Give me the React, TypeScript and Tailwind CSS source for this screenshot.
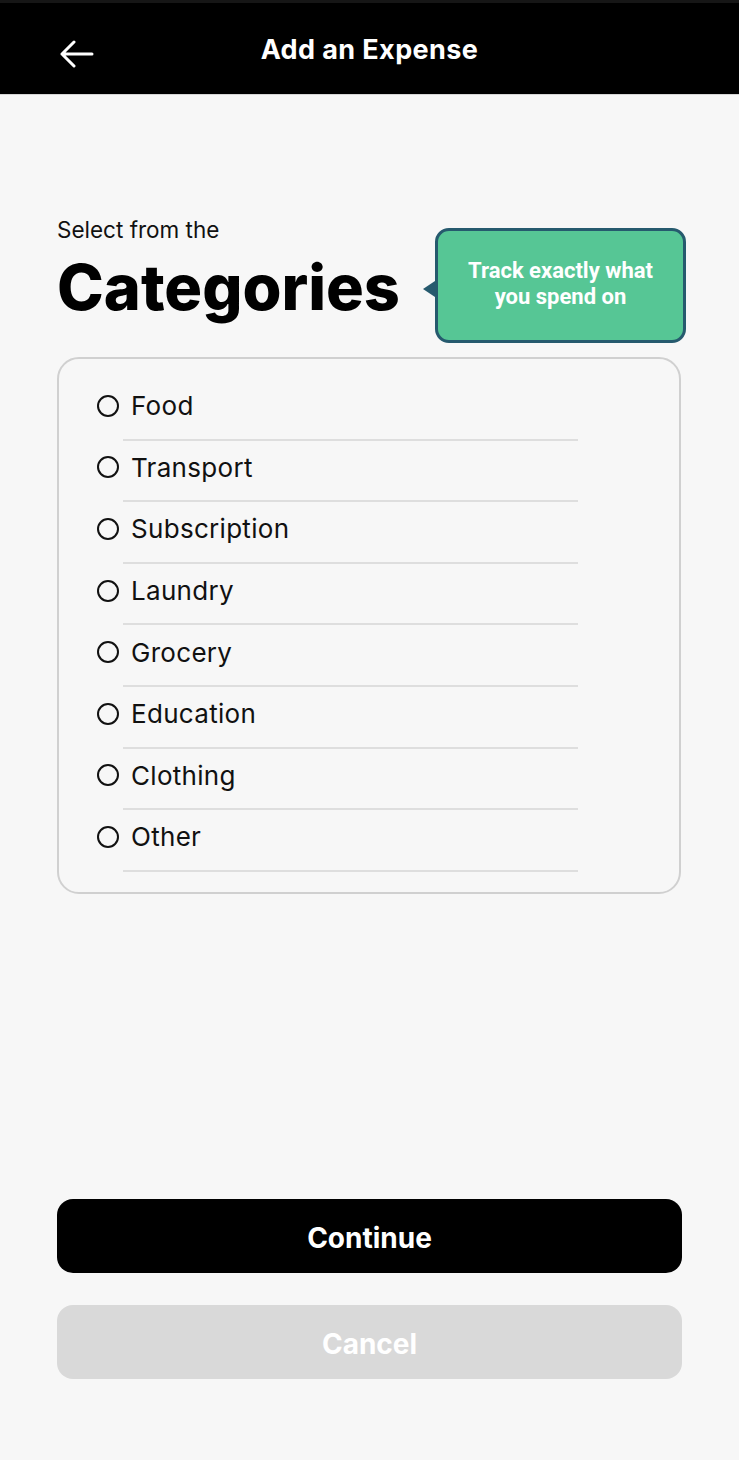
import React from "react";

const categories = [
  "Food",
  "Transport",
  "Subscription",
  "Laundry",
  "Grocery",
  "Education",
  "Clothing",
  "Other",
];

const BackArrow = () => (
  <svg width="34" height="30" viewBox="0 0 34 30" fill="none">
    <path
      d="M14 3 L2 15 L14 27 M2 15 H32"
      stroke="white"
      strokeWidth="3"
      strokeLinecap="round"
      strokeLinejoin="round"
    />
  </svg>
);

const CategoryRow = ({ label }: { label: string }) => {
  return (
    <div className="flex flex-col">
      <div className="flex h-[59.6px] items-center gap-[12px] pb-[6px] pl-[38px]">
        <span className="h-[22px] w-[22px] rounded-full border-[2px] border-[#111]" />
        <span className="text-[26px] text-[#111] font-['Inter',sans-serif] tracking-[0.3px]">
          {label}
        </span>
      </div>
      <div className="ml-[64px] h-[2px] w-[455px] bg-[#dedede]" />
    </div>
  );
};

export default function App() {
  return (
    <div className="flex min-h-[1460px] w-full flex-col bg-[#f7f7f7]">
      <div className="h-[3px] bg-[#161616]" />
      <header className="relative flex h-[92px] items-center justify-center border-b border-[#d6d6d6] bg-black">
        <button className="absolute left-[60px] top-[36px]">
          <BackArrow />
        </button>
        <h1 className="mt-[4px] text-[27px] font-bold text-white font-['Inter',sans-serif] tracking-[0.4px]">
          Add an Expense
        </h1>
      </header>

      <main className="flex flex-1 flex-col px-[57px]">
        <div className="mt-[122px] flex items-start justify-between">
          <div className="flex flex-col">
            <p className="text-[22.5px] leading-[26px] text-[#111] font-['Inter',sans-serif]">
              Select from the
            </p>
            <h2 className="mt-[4px] text-[63px] leading-[80px] font-extrabold text-black font-['Inter',sans-serif] tracking-[0px]">
              Categories
            </h2>
          </div>
          <div className="relative -mr-[4px] mt-[11px] flex h-[115px] w-[251px] items-center justify-center rounded-[14px] border-[3px] border-[#265a6e] bg-[#56c695]">
            <span className="absolute left-[-15px] top-[50px] h-0 w-0 border-y-[8px] border-r-[12px] border-y-transparent border-r-[#265a6e]" />
            <p className="-mt-[4px] text-center text-[22px] leading-[26px] font-bold text-white font-['Roboto',sans-serif]">
              Track exactly what
              <br />
              you spend on
            </p>
          </div>
        </div>

        <div className="mt-[14px] flex w-[624px] flex-col rounded-[22px] border-[2px] border-[#d0d0d0] pt-[20px] pb-[20px]">
          {categories.map((c) => (
            <CategoryRow key={c} label={c} />
          ))}
        </div>

        <div className="mt-auto flex flex-col gap-[32px] pb-[81px]">
          <button className="h-[74px] w-full rounded-[16px] bg-black pt-[4px] text-[28px] font-bold text-white font-['Inter',sans-serif]">
            Continue
          </button>
          <button className="h-[74px] w-full rounded-[16px] bg-[#d9d9d9] pt-[4px] text-[28px] font-bold text-white font-['Inter',sans-serif]">
            Cancel
          </button>
        </div>
      </main>
    </div>
  );
}
